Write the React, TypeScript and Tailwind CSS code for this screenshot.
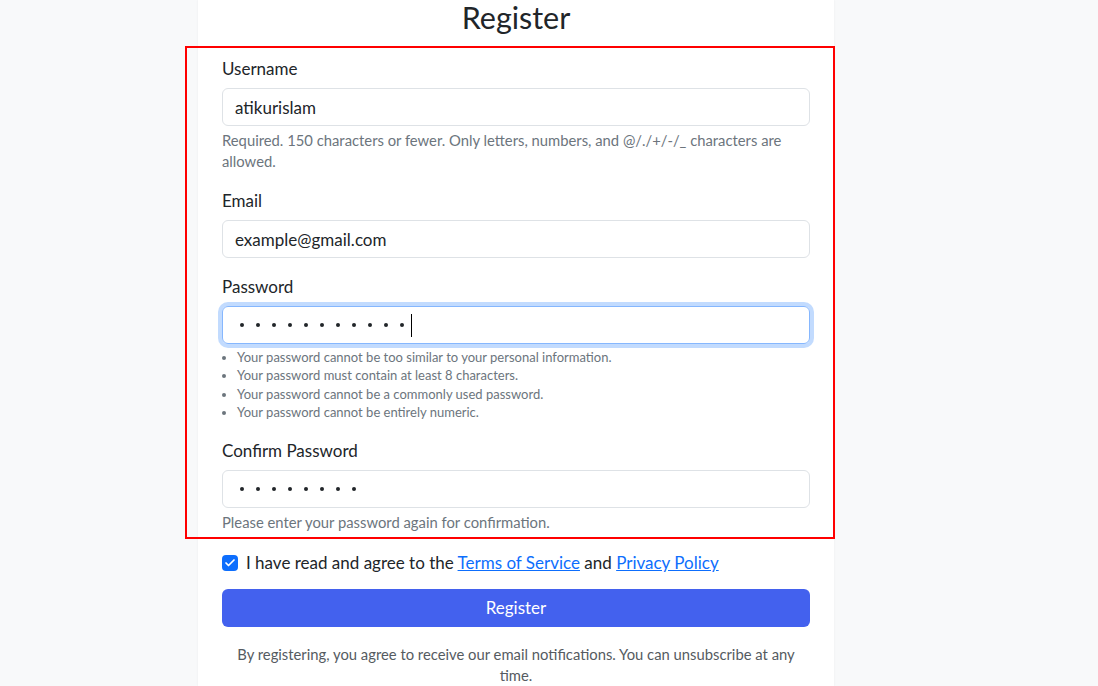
import { Check } from 'lucide-react';

const font = { fontFamily: 'Lato, "Noto Sans", sans-serif' };

function Dots({ count, caret }: { count: number; caret?: boolean }) {
  return (
    <div className="flex h-full items-center pl-[17px]">
      <div className="flex items-center gap-[12.5px]">
        {Array.from({ length: count }).map((_, i) => (
          <span key={i} className="h-[3.5px] w-[3.5px] rounded-full bg-[#212529]"></span>
        ))}
      </div>
      {caret && <span className="ml-[7px] h-[23px] w-px bg-black"></span>}
    </div>
  );
}

export default function App() {
  const rules = [
    'Your password cannot be too similar to your personal information.',
    'Your password must contain at least 8 characters.',
    'Your password cannot be a commonly used password.',
    'Your password cannot be entirely numeric.',
  ];

  return (
    <div className="h-[686px] overflow-hidden bg-[#f8f9fa] text-[#212529]" style={font}>
      <div className="relative ml-[198px] h-full w-[636px] bg-white px-[24px] shadow-[0_0_2px_rgba(0,0,0,0.06)]">
        <h1 className="pt-[1px] text-center text-[30.5px] font-normal leading-[33px] text-[#212529]">Register</h1>

        {/* highlight box */}
        <div className="pointer-events-none absolute left-[-13px] top-[46px] h-[493px] w-[650px] border-2 border-[#ff0000]"></div>

        <form className="flex flex-col">
          <label className="mb-[7px] mt-[23px] text-[17px] leading-[24px]">Username</label>
          <input
            readOnly
            value="atikurislam"
            className="h-[38px] w-full rounded-[6px] border border-[#dee2e6] px-[12px] text-[17px] text-[#212529] outline-none"
            style={font}
          />
          <p className="mt-[4px] text-[14.8px] leading-[21px] text-[#6c757d]">
            Required. 150 characters or fewer. Only letters, numbers, and @/./+/-/_ characters are allowed.
          </p>

          <label className="mb-[7px] mt-[17px] text-[17px] leading-[24px]">Email</label>
          <input
            readOnly
            value="example@gmail.com"
            className="h-[38px] w-full rounded-[6px] border border-[#dee2e6] px-[12px] text-[17px] text-[#212529] outline-none"
            style={font}
          />

          <label className="mb-[7px] mt-[17px] text-[17px] leading-[24px]">Password</label>
          <div className="h-[38px] w-full rounded-[6px] border border-[#86b7fe] shadow-[0_0_0_4px_rgba(13,110,253,0.25)]">
            <Dots count={11} caret />
          </div>
          <ul className="mt-[4px] list-disc pl-[15px] text-[13px] leading-[18.3px] text-[#6c757d] marker:text-[#6c757d]">
            {rules.map((r) => (
              <li key={r}>{r}</li>
            ))}
          </ul>

          <label className="mb-[7px] mt-[18px] text-[17px] leading-[24px]">Confirm Password</label>
          <div className="h-[38px] w-full rounded-[6px] border border-[#dee2e6]">
            <Dots count={8} />
          </div>
          <p className="mt-[4px] text-[14.8px] leading-[21px] text-[#6c757d]">
            Please enter your password again for confirmation.
          </p>

          <div className="mt-[18px] flex items-center gap-[8px] text-[17px] leading-[24px]">
            <span className="flex h-[16px] w-[16px] items-center justify-center rounded-[4px] bg-[#0d6efd]">
              <Check size={12} strokeWidth={3.5} className="text-white" />
            </span>
            <span>
              I have read and agree to the{' '}
              <a className="text-[#0d6efd] underline">Terms of Service</a> and{' '}
              <a className="text-[#0d6efd] underline">Privacy Policy</a>
            </span>
          </div>

          <button
            type="button"
            className="mt-[14px] h-[38px] w-full rounded-[6px] bg-[#4361ee] text-[17px] text-white"
            style={font}
          >
            Register
          </button>

          <p className="mt-[17px] px-[10px] text-center text-[14.8px] leading-[21px] text-[#555b61]">
            By registering, you agree to receive our email notifications. You can unsubscribe at any time.
          </p>
        </form>
      </div>
    </div>
  );
}
